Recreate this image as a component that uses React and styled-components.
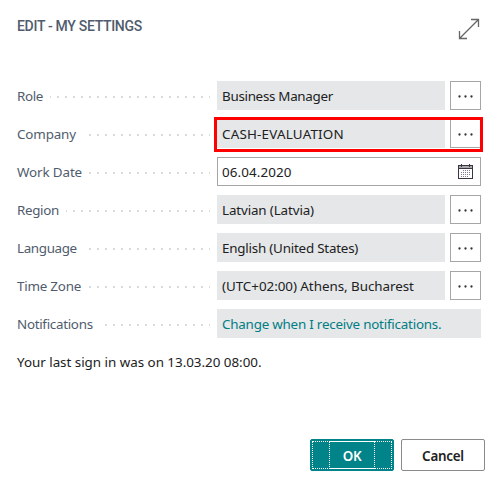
import React from 'react';
import styled, { createGlobalStyle } from 'styled-components';

const GlobalStyle = createGlobalStyle`
  *, *::before, *::after { box-sizing: border-box; }
  body {
    margin: 0;
    background: #fff;
    font-family: "Noto Sans", sans-serif;
    font-size: 13.4px;
    color: #212121;
  }
`;

const Dialog = styled.main`
  display: flex;
  flex-direction: column;
  width: 498px;
  height: 481px;
  padding: 17px 13px 10px 17px;
  background: #fff;
  overflow: hidden;
`;

const Header = styled.header`
  display: flex;
  justify-content: space-between;
  height: 64px;
`;

const Title = styled.h1`
  margin: 0;
  font: 500 14px/19px Roboto, sans-serif;
  letter-spacing: -0.31px;
  color: #505c6d;
`;

const ExpandButton = styled.button`
  width: 24px;
  height: 24px;
  padding: 0;
  border: 0;
  background: none;
  margin-right: 4px;
`;

const Fields = styled.div`
  display: flex;
  flex-direction: column;
  gap: 9px;
  width: 464px;
`;

const Row = styled.div`
  position: relative;
  display: flex;
  height: 29px;
`;

const Caption = styled.div`
  display: flex;
  width: 193px;
  margin-right: 7px;
  justify-content: space-between;
  line-height: 30px;
  color: #505c6d;
  white-space: nowrap;
`;

const Text = styled.span`
  letter-spacing: ${(p) => p.$spacing || 0}px;
  white-space: nowrap;
`;

const Leader = styled.span`
  width: ${(p) => p.$width}px;
  height: 2px;
  margin-top: 15px;
  background: repeating-linear-gradient(to left, #dadbdc 0 1px, transparent 1px 7px, #dadbdc 7px 8px);
`;

const Value = styled.div`
  flex: 1;
  padding-left: 5px;
  line-height: 30px;
  background: #e5e7e9;
  color: ${(p) => (p.$link ? '#007d83' : '#212121')};
`;

const DateInput = styled.div`
  flex: 1;
  display: flex;
  justify-content: space-between;
  align-items: center;
  padding: 0 6px 0 4px;
  border: 1px solid #a6a6a6;
  background: #fff;
`;

const AssistButton = styled.button`
  display: flex;
  align-items: center;
  justify-content: center;
  width: 31px;
  height: 29px;
  margin-left: 5px;
  padding: 0;
  border: 1px solid #a6a6a6;
  background: #fff;
`;

const Highlight = styled.div`
  position: absolute;
  inset: -2px -2px -4px 197px;
  border: 3px solid #fe0000;
  pointer-events: none;
`;

const SignIn = styled.p`
  margin: 14px 0 0;
  line-height: 20px;
`;

const Footer = styled.footer`
  display: flex;
  justify-content: flex-end;
  gap: 7px;
  margin-top: auto;
`;

const Button = styled.button`
  display: flex;
  align-items: stretch;
  justify-content: center;
  width: 84px;
  height: 32px;
  padding: 1px;
  border: 1px solid ${(p) => (p.$primary ? '#008489' : '#8a8a8a')};
  border-radius: 2px;
  background: ${(p) => (p.$primary ? '#008489' : '#fff')};
  color: ${(p) => (p.$primary ? '#fff' : '#212121')};
  font: 600 13.4px/31px "Noto Sans", sans-serif;
  letter-spacing: -0.25px;
`;

const FocusRing = styled.span`
  flex: 1;
  display: flex;
  justify-content: center;
  border: 1px dotted #fff;
`;

const FocusText = styled.span`
  width: 46px;
  margin: -1px 0;
  border: 1px dotted #fff;
  line-height: 29px;
`;

function ExpandIcon() {
  return (
    <svg width="24" height="24" viewBox="0 0 24 24" fill="none" stroke="#666" strokeWidth="1.3">
      <path d="M2.5 21.5 21.5 2.5M14 2.5h7.5V10M2.5 14v7.5H10" />
    </svg>
  );
}

function Ellipsis() {
  return (
    <svg width="17" height="4" viewBox="0 0 17 4" fill="#333">
      <circle cx="2.5" cy="2.5" r="1.15" />
      <circle cx="8.5" cy="2.5" r="1.15" />
      <circle cx="14.5" cy="2.5" r="1.15" />
    </svg>
  );
}

function CalendarIcon() {
  return (
    <svg width="17" height="15" viewBox="0 0 17 15" shapeRendering="crispEdges">
      <path fill="#3c3440" d="M1 1h15v14H1zM2 5v9h13V5z" fillRule="evenodd" />
      <path fill="#aaa" d="M2 2h13v2H2z" />
      <path fill="#3c3440" d="M4 0h1v3H4zM12 0h1v3h-1z" />
      <path stroke="#85789a" strokeDasharray="1 1" d="M6 6.5h8M4 8.5h10M4 10.5h10M4 12.5h7" />
    </svg>
  );
}

const fields = [
  { label: 'Role', labelSpacing: -0.4, leader: 160, value: 'Business Manager', spacing: -0.3 },
  { label: 'Company', labelSpacing: -0.15, leader: 121, value: 'CASH-EVALUATION', spacing: 0.2, marked: true },
  { label: 'Work Date', labelSpacing: -0.12, leader: 121, value: '06.04.2020', spacing: 0.1, kind: 'date' },
  { label: 'Region', labelSpacing: -0.35, leader: 144, value: 'Latvian (Latvia)', spacing: -0.13 },
  { label: 'Language', labelSpacing: -0.35, leader: 121, value: 'English (United States)', spacing: -0.22 },
  { label: 'Time Zone', labelSpacing: -0.22, leader: 121, value: '(UTC+02:00) Athens, Bucharest', spacing: -0.04 },
  {
    label: 'Notifications',
    labelSpacing: -0.3,
    leader: 105,
    value: 'Change when I receive notifications.',
    spacing: -0.22,
    kind: 'link',
  },
];

function Field({ label, leader, value, kind, marked, labelSpacing, spacing }) {
  return (
    <Row>
      <Caption>
        <Text $spacing={labelSpacing}>{label}</Text>
        <Leader $width={leader} />
      </Caption>
      {kind === 'date' ? (
        <DateInput>
          <Text $spacing={spacing}>{value}</Text>
          <CalendarIcon />
        </DateInput>
      ) : (
        <Value $link={kind === 'link'}>
          <Text $spacing={spacing}>{value}</Text>
        </Value>
      )}
      {!kind && (
        <AssistButton aria-label={`Choose ${label}`}>
          <Ellipsis />
        </AssistButton>
      )}
      {marked && <Highlight />}
    </Row>
  );
}

export default function App() {
  return (
    <>
      <GlobalStyle />
      <Dialog>
        <Header>
          <Title>EDIT - MY SETTINGS</Title>
          <ExpandButton aria-label="Expand">
            <ExpandIcon />
          </ExpandButton>
        </Header>
        <Fields>
          {fields.map((field) => (
            <Field key={field.label} {...field} />
          ))}
        </Fields>
        <SignIn>
          <Text $spacing={-0.02}>Your last sign in was on 13.03.20 08:00.</Text>
        </SignIn>
        <Footer>
          <Button $primary>
            <FocusRing>
              <FocusText>OK</FocusText>
            </FocusRing>
          </Button>
          <Button>Cancel</Button>
        </Footer>
      </Dialog>
    </>
  );
}
